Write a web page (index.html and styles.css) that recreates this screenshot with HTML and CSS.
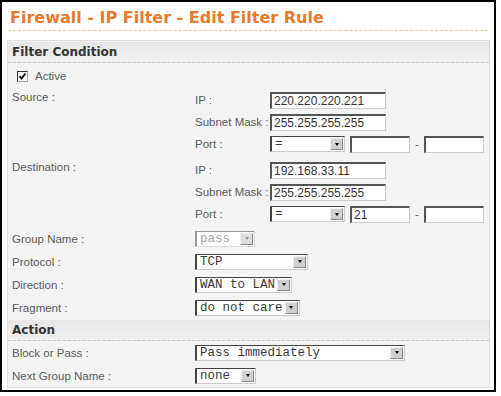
FILE: index.html
```html
<!DOCTYPE html>
<html lang="en">
<head>
  <meta charset="UTF-8" />
  <meta name="viewport" content="width=device-width, initial-scale=1" />
  <title>Firewall - IP Filter - Edit Filter Rule</title>
  <link rel="stylesheet" href="styles.css">
</head>
<body>

  <div class="frame">
    <h1 class="title">Firewall - IP Filter - Edit Filter Rule</h1>

    <div class="panel">
      <div class="sec">Filter Condition</div>

      <div class="row check-row">
        <span class="check"><svg width="9" height="9" viewBox="0 0 9 9"><path d="M1.5 4 L3.5 6.5 L7.5 1.5" fill="none" stroke="#000" stroke-width="1.8"/></svg></span>
        <span class="check-lbl">Active</span>
      </div>

      <div class="row group">
        <div class="lbl">Source :</div>
        <div class="sub">
          <div class="srow"><span class="slbl">IP :</span><input class="txt ip" value="220.220.220.221"></div>
          <div class="srow"><span class="slbl">Subnet Mask :</span><input class="txt ip" value="255.255.255.255"></div>
          <div class="srow">
            <span class="slbl">Port :</span>
            <span class="sel port-sel"><span class="val">=</span><span class="arr"></span></span>
            <input class="txt port" value="">
            <span class="dash">-</span>
            <input class="txt port" value="">
          </div>
        </div>
      </div>

      <div class="row group dest">
        <div class="lbl">Destination :</div>
        <div class="sub">
          <div class="srow"><span class="slbl">IP :</span><input class="txt ip" value="192.168.33.11"></div>
          <div class="srow"><span class="slbl">Subnet Mask :</span><input class="txt ip" value="255.255.255.255"></div>
          <div class="srow">
            <span class="slbl">Port :</span>
            <span class="sel port-sel"><span class="val">=</span><span class="arr"></span></span>
            <input class="txt port" value="21">
            <span class="dash">-</span>
            <input class="txt port" value="">
          </div>
        </div>
      </div>

      <div class="rows first">
        <div class="row line"><div class="lbl">Group Name :</div><span class="sel off w-group"><span class="val">pass</span><span class="arr"></span></span></div>
        <div class="row line"><div class="lbl">Protocol :</div><span class="sel w-proto"><span class="val">TCP</span><span class="arr"></span></span></div>
        <div class="row line"><div class="lbl">Direction :</div><span class="sel"><span class="val">WAN to LAN</span><span class="arr"></span></span></div>
        <div class="row line"><div class="lbl">Fragment :</div><span class="sel"><span class="val">do not care</span><span class="arr"></span></span></div>
      </div>

      <div class="sec">Action</div>

      <div class="rows">
        <div class="row line"><div class="lbl">Block or Pass :</div><span class="sel w-block"><span class="val">Pass immediately</span><span class="arr"></span></span></div>
        <div class="row line"><div class="lbl">Next Group Name :</div><span class="sel w-next"><span class="val">none</span><span class="arr"></span></span></div>
      </div>
    </div>
  </div>

</body>
</html>
```

FILE: styles.css
```css
body {
  margin: 0;
  background: #fff;
  font-family: "Liberation Sans", Arial, sans-serif;
}

.frame {
  width: 492px;
  height: 388px;
  border: 2px solid #000;
  background: #fff;
}

.title {
  margin: 0 6px 9px 6px;
  padding: 6px 0 2px 2px;
  height: 20px;
  line-height: 20px;
  font-family: "DejaVu Sans", Verdana, sans-serif;
  font-size: 16px;
  font-weight: bold;
  color: #e87a2c;
  border-bottom: 1px dashed #f1c89a;
}

.panel {
  margin: 0 4px 0 5px;
  height: 346px;
  border: 1px solid #dcdcdc;
  background: #f4f4f4;
}

.sec {
  height: 20px;
  line-height: 20px;
  padding-left: 4px;
  margin-top: 1px;
  font-family: "DejaVu Sans", Verdana, sans-serif;
  font-size: 12px;
  font-weight: bold;
  color: #333;
  background: linear-gradient(#e6e6e6, #f0f0f0);
  border-bottom: 1px dashed #c8c8c8;
}

.row {
  display: flex;
  padding-left: 4px;
  font-size: 11.5px;
  color: #5a5a5a;
}

.check-row {
  height: 22px;
  margin-top: 2px;
  align-items: center;
  padding-left: 9px;
}

.check {
  width: 9px;
  height: 9px;
  border: 1px solid;
  border-color: #333 #aaa #aaa #333;
  background: #fff;
  display: flex;
}

.check-lbl {
  margin-left: 7px;
}

.group {
  margin-top: 2px;
}

.group.dest {
  margin-top: 4px;
}

.lbl {
  width: 183px;
  flex: none;
}

.group .lbl {
  padding-top: 1px;
  line-height: 14px;
}

.srow {
  height: 22px;
  display: flex;
  align-items: center;
}

.slbl {
  width: 75px;
  flex: none;
}

.txt {
  box-sizing: border-box;
  height: 17px;
  margin: 0;
  padding: 0 2px;
  border-style: solid;
  border-width: 2px 1px 1px 2px;
  border-color: #555 #ccc #ccc #555;
  background: #fff;
  font-family: "Liberation Sans", Arial, sans-serif;
  font-size: 12px;
  color: #333;
  outline: none;
}

.ip {
  width: 116px;
}

.port {
  width: 60px;
}

.port-sel {
  width: 75px;
  margin-right: 5px;
}

.dash {
  width: 14px;
  text-align: center;
}

.rows.first {
  margin-top: 2px;
}

.line {
  height: 23px;
  align-items: center;
}

.sel {
  box-sizing: border-box;
  height: 16px;
  display: inline-flex;
  align-items: center;
  justify-content: space-between;
  border-style: solid;
  border-width: 1px 1px 1px 2px;
  border-color: #444 #ccc #ccc #444;
  background: #fff;
  font-family: "Liberation Mono", "Courier New", monospace;
  font-size: 12.5px;
  color: #3a3a3a;
}

.val {
  padding-left: 3px;
  white-space: pre;
}

.arr {
  width: 13px;
  height: 12px;
  margin: 0 1px 0 2px;
  box-sizing: border-box;
  border: 1px solid;
  border-color: #eee #888 #888 #eee;
  background: #d0d0d0;
  display: flex;
  align-items: center;
  justify-content: center;
}

.arr::after {
  content: "";
  border-left: 2.5px solid transparent;
  border-right: 2.5px solid transparent;
  border-top: 3px solid #000;
}

.off {
  border-color: #999 #ddd #ddd #999;
}

.off .val {
  color: #aaa;
}

.off .arr {
  background: #dedede;
}

.off .arr::after {
  border-top-color: #999;
}

.w-group {
  width: 60px;
}

.w-proto {
  width: 113px;
}

.w-block {
  width: 210px;
}

.w-next {
  width: 61px;
}
```
